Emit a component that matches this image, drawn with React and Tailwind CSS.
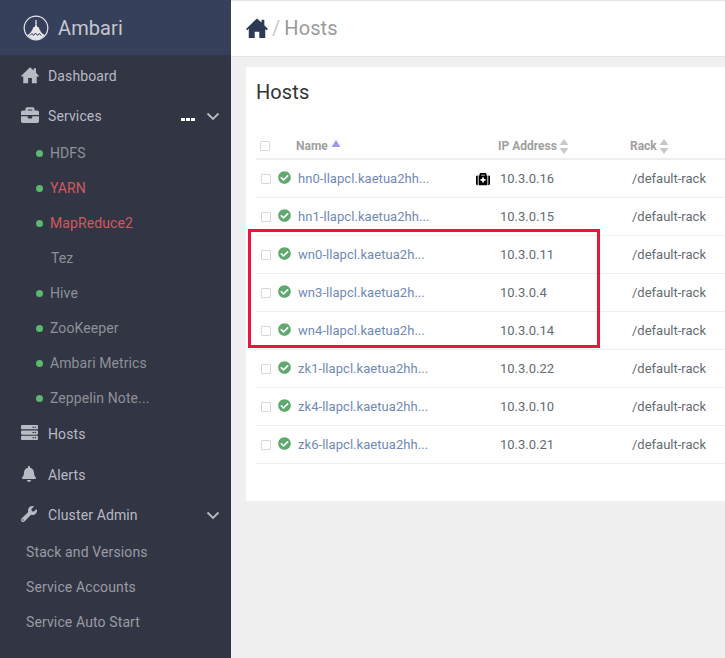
import React from "react";
import { FaBriefcase, FaBell, FaWrench, FaServer, FaCheckCircle, FaMedkit } from "react-icons/fa";

const F = { fontFamily: "Roboto, sans-serif" };

function HomeIcon({ size = 18, className = "" }) {
  return (
    <svg width={size} height={size} viewBox="0 0 24 24" className={className} fill="currentColor">
      <path d="M12 1.500L17 6V3h3v6l4 4.200-1.600 1.300L21 13.200V23h-6.500v-7h-5v7H3v-9.800l-1.400 1.300L0 13.200z" />
    </svg>
  );
}

function Chevron() {
  return (
    <svg width="14" height="9" viewBox="0 0 14 9" fill="none" className="ml-auto shrink-0">
      <path d="M1.500 1.500l5.500 5.500 5.500-5.500" stroke="#b8bac4" strokeWidth="1.800" />
    </svg>
  );
}

function Logo() {
  return (
    <svg width="26" height="26" viewBox="0 0 26 26" fill="none">
      <circle cx="13" cy="13" r="11.8" stroke="#e4e6ea" strokeWidth="1.2" />
      <path d="M13 5v4" stroke="#e4e6ea" strokeWidth="1.3" />
      <path d="M11.600 12l1.400-4 1.400 4z" fill="#e4e6ea" />
      <path d="M4 20c3-1 5-4 6.500-8h5c1.500 4 3.500 7 6.500 8-2 2.600-5.200 4.500-9 4.500s-7-1.900-9-4.500z" fill="#e4e6ea" />
      <path d="M7 20.500l2-2 1.500 2 2-2.500 2 2.500 1.500-2 2.500 2" stroke="#36405a" strokeWidth="1" />
    </svg>
  );
}

function NavItem({ icon: Icon, label, size = 18, h = "h-[40px]", right, mt = "" }) {
  return (
    <div className={`${h} ${mt} flex items-center pl-[21px] pr-[11px] text-[14px] tracking-[0.12px] text-[#b8bac4]`}>
      <span className="w-[27px] flex items-center">
        <Icon size={size} className="text-[#b8bac4] -mt-[3px]" />
      </span>
      <span>{label}</span>
      {right}
    </div>
  );
}

function Sub({ label, dot = true, red = false }) {
  return (
    <div className="h-[35px] flex items-center pl-[36px] text-[14px] tracking-[0.1px]">
      {dot ? <span className="w-[7px] h-[7px] rounded-full bg-[#5cb870] mr-[7px]" /> : <span className="w-[15px]" />}
      <span className={red ? "text-[#cf5a5e]" : "text-[#8f9099]"}>{label}</span>
    </div>
  );
}

function Admin({ label }) {
  return <div className="h-[35px] flex items-center pl-[26px] text-[14px] tracking-[0.12px] text-[#9a9ba4]">{label}</div>;
}

const rows = [
  ["hn0-llapcl.kaetua2hh...", "10.3.0.16", true],
  ["hn1-llapcl.kaetua2hh...", "10.3.0.15"],
  ["wn0-llapcl.kaetua2h...", "10.3.0.11"],
  ["wn3-llapcl.kaetua2h...", "10.3.0.4"],
  ["wn4-llapcl.kaetua2h...", "10.3.0.14"],
  ["zk1-llapcl.kaetua2hh...", "10.3.0.22"],
  ["zk4-llapcl.kaetua2hh...", "10.3.0.10"],
  ["zk6-llapcl.kaetua2hh...", "10.3.0.21"],
];

function Box() {
  return <span className="w-[10px] h-[10px] border border-[#d8d8d8] rounded-[1px] bg-white block" />;
}

function SortArrows() {
  return (
    <svg width="10" height="15" viewBox="0 0 10 15" className="ml-[2px]">
      <path d="M5 0l4.500 6h-9z" fill="#c8c8c8" />
      <path d="M5 15l4.500-6h-9z" fill="#c8c8c8" />
    </svg>
  );
}

export default function App() {
  return (
    <div className="relative w-[725px] h-[658px] overflow-hidden flex bg-[#f0f0f0]" style={F}>
      <aside className="w-[231px] shrink-0 bg-[#323544] flex flex-col">
        <div className="h-[55px] bg-[#36405a] flex items-center pl-[23px] gap-[9px]">
          <Logo />
          <span className="text-[20px] text-[#c4c7cf] tracking-[0.1px]">Ambari</span>
        </div>
        <NavItem icon={HomeIcon} label="Dashboard" mt="mt-[1px]" />
        <NavItem
          icon={FaBriefcase}
          label="Services"
          right={
            <span className="ml-auto flex items-center">
              <span className="flex gap-[1px] mr-[11px] mt-[7px]">
                <i className="w-[4px] h-[3px] bg-white block" />
                <i className="w-[4px] h-[3px] bg-white block" />
                <i className="w-[4px] h-[3px] bg-white block" />
              </span>
              <Chevron />
            </span>
          }
        />
        <Sub label="HDFS" />
        <Sub label="YARN" red />
        <Sub label="MapReduce2" red />
        <Sub label="Tez" dot={false} />
        <Sub label="Hive" />
        <Sub label="ZooKeeper" />
        <Sub label="Ambari Metrics" />
        <Sub label="Zeppelin Note..." />
        <NavItem icon={FaServer} label="Hosts" size={17} mt="-mt-[2px]" />
        <NavItem icon={FaBell} label="Alerts" size={16} mt="mt-[1px]" />
        <NavItem icon={FaWrench} label="Cluster Admin" size={16} right={<Chevron />} />
        <Admin label="Stack and Versions" />
        <Admin label="Service Accounts" />
        <Admin label="Service Auto Start" />
      </aside>

      <main className="flex-1 min-w-0 flex flex-col">
        <div className="h-[57px] shrink-0 bg-white border-t border-b border-[#e4e4e4] flex items-center pl-[15px]">
          <HomeIcon size={22} className="text-[#2d3a54] -mt-[2px]" />
          <span className="text-[20px] text-[#c8c8c8] ml-[4px] mr-[4px] -mt-[1px]">/</span>
          <span className="text-[20px] text-[#9a9a9a] -mt-[1px] tracking-[0.1px]">Hosts</span>
        </div>
        <section className="mt-[10px] ml-[15px] h-[434px] bg-white pl-[10px]">
          <h1 className="text-[20px] text-[#333] leading-[24px] pt-[13px] h-[50px] tracking-[0.1px]">Hosts</h1>
          <div className="mt-[3px] h-[40px] pt-[14px] flex items-center border-b-[2px] border-[#eeeeee] text-[12px] font-bold text-[#a0a0a0]">
            <span className="ml-[4px] w-[36px] -mt-[1px]"><Box /></span>
            <span className="w-[202px] flex items-center">
              Name
              <svg width="10" height="7" viewBox="0 0 10 7" className="ml-[3px] -mt-[5px]">
                <path d="M5 0l4.500 7h-9z" fill="#9a9bf0" />
              </svg>
            </span>
            <span className="w-[132px] flex items-center">IP Address<SortArrows /></span>
            <span className="flex items-center">Rack<SortArrows /></span>
          </div>
          {rows.map(([name, ip, med]) => (
            <div key={name} className="h-[38px] flex items-center border-b border-[#eeeeee] text-[13px]">
              <span className="ml-[5px] w-[17px]"><Box /></span>
              <span className="w-[20px] -mt-[3px]">
                <FaCheckCircle size={13} className="text-[#5fa96e]" />
              </span>
              <span className="w-[178px] text-[#7089b8] whitespace-nowrap tracking-[0.05px]">{name}</span>
              <span className="w-[24px]">
                {med && <FaMedkit size={14} className="text-black" />}
              </span>
              <span className="w-[132px] text-[#666b73]">{ip}</span>
              <span className="text-[#666b73] whitespace-nowrap">/default-rack</span>
            </div>
          ))}
        </section>
      </main>

      <div className="absolute left-[248px] top-[229px] w-[352px] h-[119px] border-[3px] border-[#ea1539]" />
    </div>
  );
}
